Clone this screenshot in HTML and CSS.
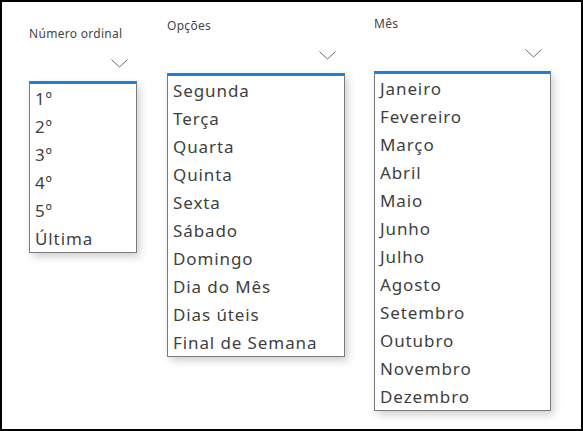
FILE: index.html
```html
<!DOCTYPE html>
<html lang="pt">
<head>
<meta charset="utf-8">
<title>Recorrência</title>
<link rel="stylesheet" href="styles.css">
</head>
<body>
<div class="frame">

<div class="field field-ordinal">
<div class="label">Número ordinal</div>
<div class="toggle"><svg width="17" height="9" viewBox="0 0 17 9"><path d="M0.5 0.5 L8.5 8 L16.5 0.5" fill="none" stroke="#6b6b6b" stroke-width="1"/></svg></div>
<ul class="list">
<li>1º</li>
<li>2º</li>
<li>3º</li>
<li>4º</li>
<li>5º</li>
<li>Última</li>
</ul>
</div>

<div class="field field-opcoes">
<div class="label">Opções</div>
<div class="toggle"><svg width="17" height="9" viewBox="0 0 17 9"><path d="M0.5 0.5 L8.5 8 L16.5 0.5" fill="none" stroke="#6b6b6b" stroke-width="1"/></svg></div>
<ul class="list">
<li>Segunda</li>
<li>Terça</li>
<li>Quarta</li>
<li>Quinta</li>
<li>Sexta</li>
<li>Sábado</li>
<li>Domingo</li>
<li>Dia do Mês</li>
<li>Dias úteis</li>
<li>Final de Semana</li>
</ul>
</div>

<div class="field field-mes">
<div class="label">Mês</div>
<div class="toggle"><svg width="17" height="9" viewBox="0 0 17 9"><path d="M0.5 0.5 L8.5 8 L16.5 0.5" fill="none" stroke="#6b6b6b" stroke-width="1"/></svg></div>
<ul class="list">
<li>Janeiro</li>
<li>Fevereiro</li>
<li>Março</li>
<li>Abril</li>
<li>Maio</li>
<li>Junho</li>
<li>Julho</li>
<li>Agosto</li>
<li>Setembro</li>
<li>Outubro</li>
<li>Novembro</li>
<li>Dezembro</li>
</ul>
</div>

</div>
</body>
</html>
```
FILE: styles.css
```css
body {
	margin: 0;
	background-color: #FFFFFF;
	font-family: "Noto Sans", "DejaVu Sans", sans-serif;
}
.frame {
	box-sizing: border-box;
	width: 583px;
	height: 431px;
	border: 2px solid #000000;
	padding-left: 27px;
	display: flex;
	align-items: flex-start;
}
.field {
	display: flex;
	flex-direction: column;
}
.field-ordinal {
	width: 108px;
	padding-top: 24px;
}
.field-opcoes {
	width: 178px;
	margin-left: 30px;
	padding-top: 16px;
}
.field-mes {
	width: 177px;
	margin-left: 29px;
	padding-top: 14px;
}
.label {
	font-size: 12px;
	letter-spacing: 0.3px;
	line-height: 16px;
	height: 15px;
	color: #454545;
	white-space: nowrap;
}
.toggle {
	display: flex;
	justify-content: flex-end;
	padding-right: 9px;
	margin-top: 18px;
	height: 9px;
}
.toggle svg {
	display: block;
}
.list {
	list-style: none;
	margin: 13px 0 0 0;
	padding: 0;
	background-color: #FFFFFF;
	border: 1px solid #7a7a7a;
	border-top: 3px solid #1f7fd6;
	box-shadow: 3px 4px 8px rgba(0, 0, 0, 0.18);
}
.list li {
	height: 28px;
	line-height: 29px;
	padding-left: 5px;
	font-size: 17px;
	letter-spacing: 0.9px;
	color: #3f3f3f;
	white-space: nowrap;
}
```
